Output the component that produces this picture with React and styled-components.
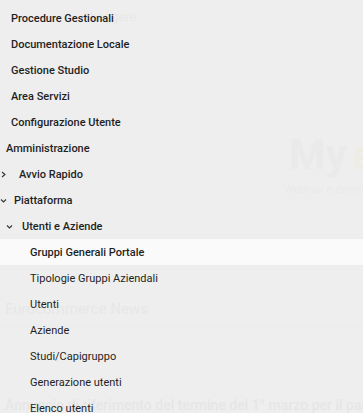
import React from 'react';
import styled, { createGlobalStyle } from 'styled-components';

const GlobalStyle = createGlobalStyle`
  html, body {
    margin: 0;
    padding: 0;
    background: #eeeeee;
    font-family: Roboto, "Liberation Sans", sans-serif;
  }
`;

const Page = styled.div`
  position: relative;
  width: 363px;
  height: 413px;
  overflow: hidden;
  background: #eeeeee;
`;

// faded page content lying behind the menu overlay
const Backdrop = styled.div`
  position: absolute;
  inset: 0;
  display: flex;
  flex-direction: column;
  pointer-events: none;
  white-space: nowrap;
`;

const TopBar = styled.div`
  height: 34px;
  padding-left: 90px;
  display: flex;
  align-items: center;
  font-size: 13px;
  color: #e8e8e8;
`;

const Hero = styled.div`
  height: 150px;
  padding: 98px 0 0 289px;
  box-sizing: border-box;
  display: flex;
  flex-direction: column;
`;

const Logo = styled.div`
  display: flex;
  align-items: baseline;
  gap: 6px;
  font-size: 42px;
  font-weight: 700;
  line-height: 48px;
  color: #eaeaea;
`;

const LogoMark = styled.span`
  font-size: 30px;
  color: #efece3;
`;

const Caption = styled.div`
  font-size: 11px;
  color: #eaeaea;
  margin-left: -5px;
`;

const News = styled.div`
  margin-top: 117px;
  padding-left: 5px;
  display: flex;
  flex-direction: column;
`;

const NewsTitle = styled.div`
  font-size: 15px;
  height: 26px;
  color: #e7e7e7;
`;

const Divider = styled.div`
  height: 1px;
  background: #ebebeb;
  margin-left: -5px;
`;

const Article = styled.div`
  margin-top: 70px;
  font-size: 14px;
  font-weight: 500;
  color: #e6e6e6;
`;

const Menu = styled.ul`
  position: relative;
  list-style: none;
  margin: 0;
  padding: 5px 0 0;
`;

const Item = styled.li`
  display: flex;
  align-items: center;
  height: 26px;
  padding-left: ${(p) => p.$indent}px;
  font-size: 11px;
  font-weight: ${(p) => (p.$strong ? 500 : 400)};
  color: #1f1f1f;
  background: ${(p) => (p.$active ? '#fafafa' : 'transparent')};
  white-space: nowrap;
`;

const Caret = styled.svg`
  width: 7px;
  height: 7px;
  flex: none;
  margin-right: ${(p) => p.$gap}px;
`;

const ChevronRight = ({ gap }) => (
  <Caret $gap={gap} viewBox="0 0 7 7">
    <path d="M2 1 L5 3.5 L2 6" fill="none" stroke="#333" strokeWidth="1.1" />
  </Caret>
);

const ChevronDown = ({ gap }) => (
  <Caret $gap={gap} viewBox="0 0 7 7">
    <path d="M1 2.5 L3.5 5 L6 2.5" fill="none" stroke="#333" strokeWidth="1.1" />
  </Caret>
);

const items = [
  { label: 'Procedure Gestionali', indent: 11, strong: true },
  { label: 'Documentazione Locale', indent: 11, strong: true },
  { label: 'Gestione Studio', indent: 11, strong: true },
  { label: 'Area Servizi', indent: 11, strong: true },
  { label: 'Configurazione Utente', indent: 11, strong: true },
  { label: 'Amministrazione', indent: 6, strong: true },
  { label: 'Avvio Rapido', indent: 0, strong: true, caret: 'right', gap: 12 },
  { label: 'Piattaforma', indent: 0, strong: true, caret: 'down', gap: 7 },
  { label: 'Utenti e Aziende', indent: 6, strong: true, caret: 'down', gap: 9 },
  { label: 'Gruppi Generali Portale', indent: 30, strong: true, active: true },
  { label: 'Tipologie Gruppi Aziendali', indent: 30 },
  { label: 'Utenti', indent: 30 },
  { label: 'Aziende', indent: 30 },
  { label: 'Studi/Capigruppo', indent: 30 },
  { label: 'Generazione utenti', indent: 30 },
  { label: 'Elenco utenti', indent: 30 },
];

export default function App() {
  return (
    <Page>
      <GlobalStyle />
      <Backdrop aria-hidden="true">
        <TopBar>Leggere</TopBar>
        <Hero>
          <Logo>
            My<LogoMark>E</LogoMark>
          </Logo>
          <Caption>Webinar e eventi</Caption>
        </Hero>
        <News>
          <NewsTitle>Eurocommerce News</NewsTitle>
          <Divider />
          <Article>Annuncio di riferimento del termine del 1° marzo per il pagamento</Article>
        </News>
      </Backdrop>
      <Menu>
        {items.map((it) => (
          <Item key={it.label} $indent={it.indent} $strong={it.strong} $active={it.active}>
            {it.caret === 'right' && <ChevronRight gap={it.gap} />}
            {it.caret === 'down' && <ChevronDown gap={it.gap} />}
            {it.label}
          </Item>
        ))}
      </Menu>
    </Page>
  );
}
